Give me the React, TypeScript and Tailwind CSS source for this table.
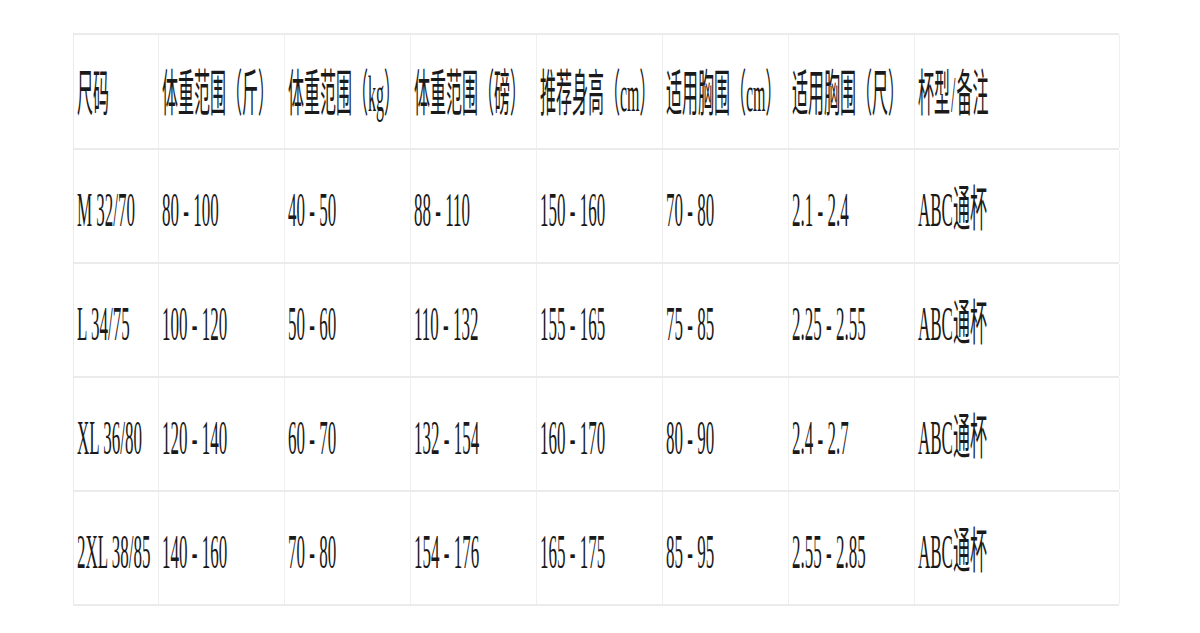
import React from "react";

const headers: React.ReactNode[] = [
  "尺码",
  "体重范围（斤）",
  "体重范围（kg）",
  "体重范围（磅）",
  "推荐身高（cm）",
  "适用胸围（cm）",
  "适用胸围（尺）",
  <>
    杯型<span className="mx-[1px]">/</span>备注
  </>,
];

const rows = [
  ["M 32/70", "80 - 100", "40 - 50", "88 - 110", "150 - 160", "70 - 80", "2.1 - 2.4", "ABC通杯"],
  ["L 34/75", "100 - 120", "50 - 60", "110 - 132", "155 - 165", "75 - 85", "2.25 - 2.55", "ABC通杯"],
  ["XL 36/80", "120 - 140", "60 - 70", "132 - 154", "160 - 170", "80 - 90", "2.4 - 2.7", "ABC通杯"],
  ["2XL 38/85", "140 - 160", "70 - 80", "154 - 176", "165 - 175", "85 - 95", "2.55 - 2.85", "ABC通杯"],
];

const font = { fontFamily: '"Liberation Serif", "Noto Sans CJK SC", serif' };

const cols = "grid grid-cols-[85px_126px_126px_126px_126px_126px_126px_205px]";

function HeadCell({ children }: { children: React.ReactNode }) {
  return (
    <div className="flex items-center border-r border-[#efefef] pl-[3px] overflow-hidden">
      <span className="inline-block whitespace-pre text-[16px] leading-none text-[#1a1a1a] scale-y-[3.15] origin-center translate-y-[3px]">
        {children}
      </span>
    </div>
  );
}

function Cell({ text }: { text: string }) {
  return (
    <div className="flex items-center border-r border-[#efefef] pl-[3px] overflow-hidden">
      <span className="inline-block whitespace-pre text-[17px] leading-none text-[#1a1a1a] scale-y-[2.9] origin-center translate-y-[4px]">
        {text}
      </span>
    </div>
  );
}

export default function App() {
  return (
    <div className="min-h-[633px] w-[1200px] bg-white pt-[33px] pl-[73px]" style={font}>
      <div className="w-[1046px] border-t-2 border-l border-[#ebebeb]">
        <div className={`${cols} h-[115px] border-b-2 border-[#ebebeb]`}>
          {headers.map((h, i) => (
            <HeadCell key={i}>{h}</HeadCell>
          ))}
        </div>
        {rows.map((r) => (
          <div key={r[0]} className={`${cols} h-[114px] border-b-2 border-[#ebebeb]`}>
            {r.map((c, i) => (
              <Cell key={i} text={c} />
            ))}
          </div>
        ))}
      </div>
    </div>
  );
}
